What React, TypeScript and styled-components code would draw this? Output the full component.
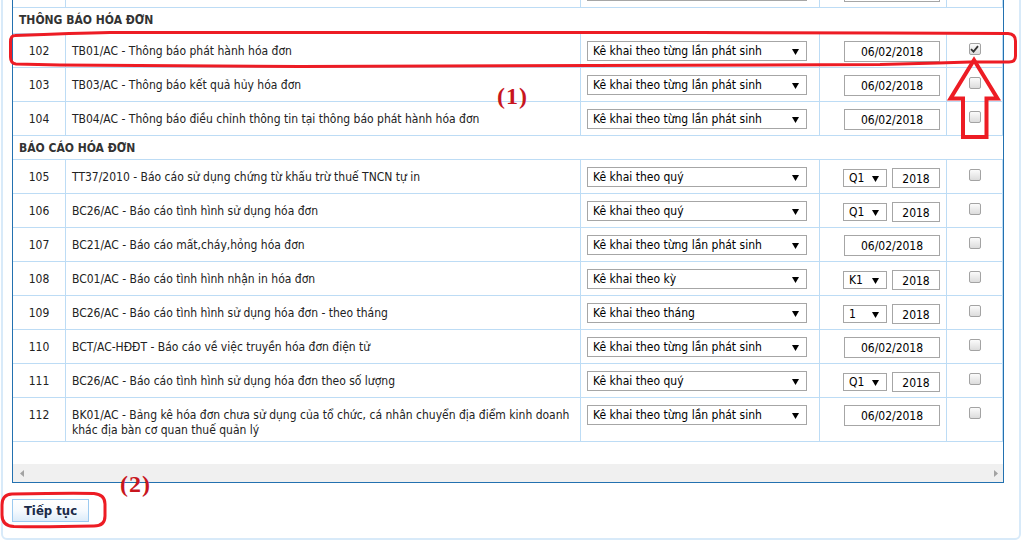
import React from "react";
import styled, { createGlobalStyle } from "styled-components";

const GlobalStyle = createGlobalStyle`
  html, body { margin: 0; padding: 0; background: #fff; }
  body {
    font-family: "DejaVu Sans Condensed", "DejaVu Sans", sans-serif;
    font-size: 12px;
    color: #222;
    overflow: hidden;
  }
`;

const LINE = "#bddcf5";
const COLS = "53px 515px 239px 127px 56px";

const Page = styled.div`
  position: relative;
  width: 1032px;
  height: 547px;
  overflow: hidden;
`;

const Panel = styled.div`
  box-sizing: border-box;
  width: 1020px;
  margin: -39px 0 0 1px;
  padding: 10px 15px 16px 9px;
  border: 2px solid #d8eaf9;
  border-radius: 6px;
`;

const Frame = styled.div`
  border: 1px solid #2371b0;
  background: #fff;
`;

const Row = styled.div<{ $h: number }>`
  display: grid;
  grid-template-columns: ${COLS};
  height: ${(p) => p.$h}px;
  box-sizing: border-box;
  border-bottom: 1px solid ${LINE};
`;

const SectionRow = styled.div<{ $h: number }>`
  box-sizing: border-box;
  height: ${(p) => p.$h}px;
  padding: 5px 6px 0;
  line-height: 15px;
  font-weight: bold;
  color: #333;
  border-bottom: 1px solid ${LINE};
`;

const Cell = styled.div`
  box-sizing: border-box;
  border-right: 1px solid ${LINE};
  min-width: 0;
`;

const NumCell = styled(Cell)`
  text-align: center;
  padding-top: 10px;
  line-height: 15px;
`;

const NameCell = styled(Cell)`
  padding: 10px 6px 0;
  line-height: 15px;
  white-space: nowrap;
`;

const TypeCell = styled(Cell)`
  padding: 7px 0 0 6px;
`;

const PeriodCell = styled(Cell)`
  display: flex;
  justify-content: flex-end;
  align-items: flex-start;
  padding: 7px 6px 0 0;
`;

const CheckCell = styled(Cell)`
  display: flex;
  justify-content: center;
  align-items: flex-start;
  padding-top: 9px;
`;

const SelectBox = styled.div<{ $w: number; $h: number }>`
  box-sizing: border-box;
  width: ${(p) => p.$w}px;
  height: ${(p) => p.$h}px;
  border: 1px solid #a6a6a6;
  background: #fff;
  color: #000;
  display: flex;
  align-items: center;
  justify-content: space-between;
  padding: 1px 7px 0 5px;
  white-space: nowrap;
  line-height: 15px;
`;

const Combo = styled.div`
  display: flex;
  align-items: center;
  gap: 5px;
  height: 20px;
  margin-top: 1px;
`;

const TextInput = styled.input<{ $w: number; $h: number }>`
  box-sizing: border-box;
  width: ${(p) => p.$w}px;
  height: ${(p) => p.$h}px;
  border: 1px solid #a6a6a6;
  background: #fff;
  color: #000;
  font: 12px "DejaVu Sans Condensed", "DejaVu Sans", sans-serif;
  text-align: center;
  padding: 1px 0 0;
  margin: 0;
  outline: none;
`;

const CheckBox = styled.span`
  box-sizing: border-box;
  width: 12px;
  height: 12px;
  border: 1px solid #a3a3a3;
  border-radius: 2px;
  background: linear-gradient(#fbfbfb, #dcdcdc);
  display: flex;
  align-items: center;
  justify-content: center;
`;

const Spacer = styled.div`
  height: 22px;
`;

const HScroll = styled.div`
  height: 18px;
  background: #f0f0f0;
  display: flex;
  align-items: center;
  justify-content: space-between;
  padding: 0 5px 0 7px;
`;

const ContinueButton = styled.button`
  display: block;
  box-sizing: border-box;
  width: 77px;
  height: 23px;
  margin: 16px 0 0;
  padding: 0;
  border: 1px solid #9ccaf0;
  background: linear-gradient(#ffffff 0%, #f6fafe 50%, #dcecfa 100%);
  font: bold 13px "DejaVu Sans Condensed", "DejaVu Sans", sans-serif;
  color: #1b2a48;
`;

const Overlay = styled.svg`
  position: absolute;
  left: 0;
  top: 0;
  pointer-events: none;
`;

const Mark = styled.span<{ $x: number; $y: number }>`
  position: absolute;
  left: ${(p) => p.$x}px;
  top: ${(p) => p.$y}px;
  font: bold 24px "Liberation Serif", "Times New Roman", serif;
  line-height: 24px;
  color: #c8161e;
  letter-spacing: 1px;
`;

const Arrow = () => (
  <svg width="7" height="6" viewBox="0 0 7 6">
    <polygon points="0,0 7,0 3.5,6" fill="#000" />
  </svg>
);

type Period = { kind: "date" } | { kind: "combo"; opt: string };

type Item = {
  no: string;
  name: React.ReactNode;
  type: string;
  period: Period;
  checked?: boolean;
  h?: number;
};

const ONCE = "Kê khai theo từng lần phát sinh";

// Row scrolled above the visible area: only the lower edge of its controls shows.
const hidden: Item[] = [{ no: "", name: "", type: "", period: { kind: "date" } }];

const notices: Item[] = [
  { no: "102", name: "TB01/AC - Thông báo phát hành hóa đơn", type: ONCE, period: { kind: "date" }, checked: true },
  { no: "103", name: "TB03/AC - Thông báo kết quả hủy hóa đơn", type: ONCE, period: { kind: "date" } },
  { no: "104", name: "TB04/AC - Thông báo điều chỉnh thông tin tại thông báo phát hành hóa đơn", type: ONCE, period: { kind: "date" } },
];

const reports: Item[] = [
  { no: "105", name: "TT37/2010 - Báo cáo sử dụng chứng từ khấu trừ thuế TNCN tự in", type: "Kê khai theo quý", period: { kind: "combo", opt: "Q1" } },
  { no: "106", name: "BC26/AC - Báo cáo tình hình sử dụng hóa đơn", type: "Kê khai theo quý", period: { kind: "combo", opt: "Q1" } },
  { no: "107", name: "BC21/AC - Báo cáo mất,cháy,hỏng hóa đơn", type: ONCE, period: { kind: "date" } },
  { no: "108", name: "BC01/AC - Báo cáo tình hình nhận in hóa đơn", type: "Kê khai theo kỳ", period: { kind: "combo", opt: "K1" } },
  { no: "109", name: "BC26/AC - Báo cáo tình hình sử dụng hóa đơn - theo tháng", type: "Kê khai theo tháng", period: { kind: "combo", opt: "1" } },
  { no: "110", name: "BCT/AC-HĐĐT - Báo cáo về việc truyền hóa đơn điện tử", type: ONCE, period: { kind: "date" } },
  { no: "111", name: "BC26/AC - Báo cáo tình hình sử dụng hóa đơn theo số lượng", type: "Kê khai theo quý", period: { kind: "combo", opt: "Q1" } },
  {
    no: "112",
    name: (
      <>
        BK01/AC - Bảng kê hóa đơn chưa sử dụng của tổ chức, cá nhân chuyển địa điểm kinh doanh
        <br />
        khác địa bàn cơ quan thuế quản lý
      </>
    ),
    type: ONCE,
    period: { kind: "date" },
    h: 44,
  },
];

const CheckMark = () => (
  <svg width="9" height="8" viewBox="0 0 9 8">
    <path d="M1 4.2 L3.5 6.6 L8 1.2" fill="none" stroke="#333" strokeWidth="1.8" />
  </svg>
);

const ItemRow = ({ item, blank }: { item: Item; blank?: boolean }) => (
  <Row $h={item.h ?? 34}>
    <NumCell>{item.no}</NumCell>
    <NameCell>{item.name}</NameCell>
    <TypeCell>
      <SelectBox $w={220} $h={20}>
        <span>{item.type}</span>
        {blank ? null : <Arrow />}
      </SelectBox>
    </TypeCell>
    <PeriodCell>
      {item.period.kind === "date" ? (
        <TextInput $w={96} $h={21} readOnly value={blank ? "" : "06/02/2018"} />
      ) : (
        <Combo>
          <SelectBox $w={44} $h={18}>
            <span>{item.period.opt}</span>
            <Arrow />
          </SelectBox>
          <TextInput $w={48} $h={20} readOnly value="2018" />
        </Combo>
      )}
    </PeriodCell>
    <CheckCell>{blank ? null : <CheckBox>{item.checked ? <CheckMark /> : null}</CheckBox>}</CheckCell>
  </Row>
);

const ScrollArrow = ({ dir }: { dir: "left" | "right" }) => (
  <svg width="4" height="7" viewBox="0 0 4 7">
    <polygon points={dir === "left" ? "4,0 4,7 0,3.5" : "0,0 0,7 4,3.5"} fill="#a3a3a3" />
  </svg>
);

export default function App() {
  return (
    <Page>
      <GlobalStyle />
      <Panel>
        <Frame>
          {hidden.map((it, i) => (
            <ItemRow key={`h${i}`} item={it} blank />
          ))}
          <SectionRow $h={26}>THÔNG BÁO HÓA ĐƠN</SectionRow>
          {notices.map((it) => (
            <ItemRow key={it.no} item={it} />
          ))}
          <SectionRow $h={24}>BÁO CÁO HÓA ĐƠN</SectionRow>
          {reports.map((it) => (
            <ItemRow key={it.no} item={it} />
          ))}
          <Spacer />
          <HScroll>
            <ScrollArrow dir="left" />
            <ScrollArrow dir="right" />
          </HScroll>
        </Frame>
        <ContinueButton>Tiếp tục</ContinueButton>
      </Panel>

      <Overlay width="1032" height="547" viewBox="0 0 1032 547">
        <g fill="none" stroke="#ed1c24" strokeWidth="3" strokeLinejoin="round" strokeLinecap="round">
          <path d="M 15 35.5 C 40 34.5, 80 33, 110 32.5 L 700 32.5 C 820 32.5, 900 33, 1008 33.5 Q 1015.5 34 1015.5 41 L 1015.5 56 Q 1015.5 62 1009 62 L 970 62 C 940 63, 900 64, 880 64.5 L 300 66.5 C 200 66.5, 100 66, 60 65 L 16 64 Q 10.5 63.5 10.5 57 L 10.5 42 Q 10.5 35.5 15 35.5 Z" />
          <path d="M 12 494 C 40 493.5, 70 493, 94 493.5 Q 105 494.5 105 504 L 105 516 Q 105 526 94 526 C 70 526.5, 40 527, 14 526.5 Q 2 526 2 515 L 2 505 Q 2 494.5 12 494 Z" />
        </g>
        <path
          d="M 974 60 L 997.5 98.5 L 986.5 98.5 L 986.5 137 L 963 137 L 963 98.5 L 950.5 98.5 Z"
          fill="none"
          stroke="#ed1c24"
          strokeWidth="4"
          strokeLinejoin="miter"
        />
      </Overlay>
      <Mark $x={497} $y={84}>(1)</Mark>
      <Mark $x={120} $y={472}>(2)</Mark>
    </Page>
  );
}
